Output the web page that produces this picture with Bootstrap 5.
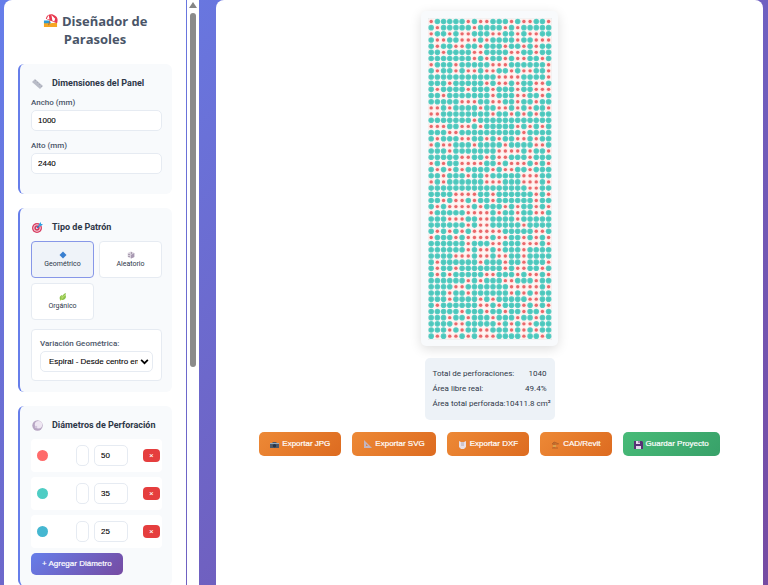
<!DOCTYPE html>
<html lang="es">
<head>
<meta charset="utf-8">
<meta name="viewport" content="width=device-width, initial-scale=1">
<title>Diseñador de Parasoles</title>
<link rel="stylesheet" href="https://cdn.jsdelivr.net/npm/bootstrap@5.3.0/dist/css/bootstrap.min.css">
<style>
body{font-family:Roboto,"Noto Sans",sans-serif;font-size:8px;line-height:12px;color:#2d3748;background:linear-gradient(135deg,#667eea,#764ba2);height:100vh;overflow:hidden}
.shell{height:100vh;padding:0 5px 0 4px;gap:17px}
.side{width:195px;gap:1px}
.side-body{border-radius:8px 0 0 0;padding:12px 14px 0;overflow:hidden;background:#fff}
.app-title{font-family:"Open Sans","Noto Sans",sans-serif;font-size:13px;line-height:18px;font-weight:700;color:#4a5568;padding:0 20px;margin:0 0 16px}
.app-title svg{width:15px;height:15px;margin-right:1px;vertical-align:-2px}
.block{background:#f8fafc;border-left:2px solid #667eea;border-radius:6px;padding:12px 10px 11px 11px;margin-bottom:14px}
.block-title{font-size:9px;line-height:14px;font-weight:700;margin:0 0 7px;white-space:nowrap}
.block-title svg{width:11px;height:11px;margin:0 9px 0 1px;flex:none}
.field{margin-bottom:9px}
.field label,.variation label{display:block;font-size:8px;line-height:12px;font-weight:500;color:#4a5568;margin-bottom:1px}
.form-control,.form-select{font:8px/14px "Liberation Sans",Arial,sans-serif;color:#000;border:1px solid #e6ebf2;border-radius:5px;padding:2px 6px;height:21px;min-height:0;-webkit-text-stroke:.1px #000}
.patterns{display:grid;grid-template-columns:1fr 1fr;gap:5px}
.pattern{height:37px;border:1px solid #e6ebf2;border-radius:4px;background:#fff;font-size:7px;line-height:9px;color:#2d3748;padding:0}
.pattern svg{width:8px;height:8px;display:block;margin:0 auto 1px}
.pattern.active{background:#eff3f9;border-color:#8797e8}
.variation{background:#fff;border:1px solid #e6ebf2;border-radius:4px;padding:8px 8px;margin-top:9px}
.form-select{padding:2px 14px 2px 8px;background-size:9px;background-position:right 3px center;background-image:url("data:image/svg+xml,%3Csvg xmlns='http://www.w3.org/2000/svg' viewBox='0 0 16 16'%3E%3Cpath fill='none' stroke='black' stroke-width='3' d='M2 5l6 6 6-6'/%3E%3C/svg%3E");text-overflow:clip}
.diam{background:#fff;border-radius:4px;height:33px;padding:0 2px 0 6px;margin-bottom:5px}
.swatch{width:11px;height:11px;border-radius:50%}
.diam .tiny{width:13px;padding:2px;margin-left:28px;margin-right:5px}
.diam .num{width:34px}
.del{width:17px;height:13px;border:0;border-radius:4px;background:#e53e3e;color:#fff;font-size:8px;line-height:12px;padding:0;margin-left:auto}
.act{border:0;border-radius:5px;color:#fff;font:8px/14px "Liberation Sans",Arial,sans-serif;-webkit-text-stroke:.2px #fff;white-space:nowrap}
.act svg{width:9px;height:9px;margin-right:3px}
.add{background:linear-gradient(135deg,#667eea,#764ba2);padding:4px 11px}
.orange{background:linear-gradient(135deg,#ed8936,#dd6b20);padding:5px 11px}
.green{background:linear-gradient(135deg,#48bb78,#38a169);padding:5px 11px}
.scroller{width:12px;background:#fff;padding:2px 3px 0}
.scroller svg{width:8px;height:6px;margin-left:-1px;display:block}
.thumb{height:354px;margin-top:5px;border-radius:4px;background:#8b8b8b}
.stage{background:#fff;border-radius:8px 8px 0 0;padding-top:11px}
.sheet{background:#f8fafc;border-radius:5px;padding:7px 6px 6px 7px;box-shadow:0 3px 12px #0002}
.sheet svg{display:block;width:124px;height:322px}
.stats{background:#edf2f7;border-radius:5px;width:130px;margin-top:12px;padding:8px;height:62px}
.stats div{height:15px;line-height:15px;white-space:nowrap}
.exports{gap:11px;margin-top:12px}
</style>
<script src="https://cdn.jsdelivr.net/npm/bootstrap@5.3.0/dist/js/bootstrap.bundle.min.js"></script>
</head>
<body>
<div class="shell d-flex">
 <aside class="side d-flex flex-shrink-0">
  <div class="side-body flex-grow-1">
   <h1 class="app-title text-center"><svg viewBox="0 0 16 16"><path fill="#f6a623" d="M1 10l7 1 7-1v5H1z"/><path fill="#2b9bd6" d="M1 8h5l3 3H1z"/><path stroke="#9b6a4a" d="M8 6l-2 7"/><path fill="#e8394f" d="M3 6C4 1 10 0 13 3c3 2 3 5 2 8z"/><path fill="#fff" d="M6 2l1 5-3-1zM9 2l1 6 2 1 1-3z"/></svg> Diseñador de Parasoles</h1>
   <section class="block">
    <h2 class="block-title d-flex align-items-center"><svg viewBox="0 0 11 11"><path fill="#b9bcc7" d="M3 1l8 7-3 3-8-7z"/><path stroke="#9298a6" stroke-width=".5" d="M4 2L3 3m3 1L5 5m3 1L7 7m3 1L9 9"/></svg>Dimensiones del Panel</h2>
    <div class="field"><label for="w">Ancho (mm)</label><input id="w" class="form-control" value="1000"></div>
    <div class="field"><label for="h">Alto (mm)</label><input id="h" class="form-control" value="2440"></div>
   </section>
   <section class="block">
    <h2 class="block-title d-flex align-items-center"><svg viewBox="0 0 11 11"><circle cx="5" cy="6" r="5" fill="#d83c61"/><circle cx="5" cy="6" r="3.3" fill="none" stroke="#f5d9df"/><circle cx="5" cy="6" r="1" fill="#fff"/><path stroke="#3478bd" stroke-width="1.4" d="M5 6l4-4"/><path fill="#30a2e2" d="M7 2l2-2v2h2L9 4H7z"/></svg>Tipo de Patrón</h2>
    <div class="patterns">
     <button class="pattern active"><svg viewBox="0 0 8 8"><path fill="#397fd0" d="M4 .5L7.5 4 4 7.5.5 4z"/></svg>Geométrico</button>
     <button class="pattern"><svg viewBox="0 0 8 8"><path fill="#d8d0dc" d="M4 .5l3.3 1.6v3.8L4 7.5.7 5.9V2.1z"/><path fill="#a899b2" d="M4 4l3.3-1.9v3.8L4 7.5z"/><path stroke="#67566f" stroke-width=".8" stroke-dasharray="1 1" d="M2 3v3M4 2h2"/></svg>Aleatorio</button>
     <button class="pattern"><svg viewBox="0 0 8 8"><path fill="#8bc34a" d="M1 7C0 4 1 3 3 2l1 1c0-2 1-2 3-3-1 2 0 3 0 4-1 3-3 3-5 3z"/><path stroke="#d7e983" stroke-width=".7" d="M1 8l5-6M3 5V3"/></svg>Orgánico</button>
    </div>
    <div class="variation"><label for="v">Variación Geométrica:</label><select id="v" class="form-select"><option>Espiral - Desde centro en espiral</option></select></div>
   </section>
   <section class="block">
    <h2 class="block-title d-flex align-items-center"><svg viewBox="0 0 11 11"><circle cx="5.5" cy="5.5" r="5.2" fill="#b7a5c3"/><circle cx="6.5" cy="4.8" r="3.7" fill="#eee6f2"/><circle cx="4" cy="7" r="1.3" fill="#d3c5dc"/></svg>Diámetros de Perforación</h2>
    <div class="diam d-flex align-items-center"><span class="swatch" style="background:#ff6b6b"></span><input class="form-control tiny" aria-label="Nombre 1"><input class="form-control num" aria-label="Diámetro 1" value="50"><button class="del" aria-label="Eliminar 1">×</button></div>
    <div class="diam d-flex align-items-center"><span class="swatch" style="background:#4ecdc4"></span><input class="form-control tiny" aria-label="Nombre 2"><input class="form-control num" aria-label="Diámetro 2" value="35"><button class="del" aria-label="Eliminar 2">×</button></div>
    <div class="diam d-flex align-items-center"><span class="swatch" style="background:#45b7d1"></span><input class="form-control tiny" aria-label="Nombre 3"><input class="form-control num" aria-label="Diámetro 3" value="25"><button class="del" aria-label="Eliminar 3">×</button></div>
    <button class="act add">+ Agregar Diámetro</button>
   </section>
  </div>
  <div class="scroller"><svg viewBox="0 0 8 6"><path fill="#858585" d="M4 0l4 6H0z"/></svg><div class="thumb"></div></div>
 </aside>
 <main class="stage flex-grow-1 d-flex flex-column align-items-center">
  <div class="sheet"><svg id="panel" viewBox="0 0 124 322" role="img" aria-label="Panel perforado"></svg></div>
  <div class="stats">
   <div class="d-flex justify-content-between"><span>Total de perforaciones:</span><span>1040</span></div>
   <div class="d-flex justify-content-between"><span>Área libre real:</span><span>49.4%</span></div>
   <div class="d-flex justify-content-between"><span>Área total perforada:</span><span>10411.8 cm²</span></div>
  </div>
  <div class="exports d-flex">
   <button class="act orange d-flex align-items-center"><svg viewBox="0 0 9 9"><path fill="#4f5865" d="M0 3h2l1-1h3l1 1h2v5H0z"/><path fill="#92aabd" d="M0 3h9v1H0z"/><circle cx="4.5" cy="5.7" r="1.7" fill="#263548"/></svg>Exportar JPG</button>
   <button class="act orange d-flex align-items-center"><svg viewBox="0 0 9 9"><path fill="#c4b5bd" fill-rule="evenodd" d="M1 0l8 8H1zM3 4v2h2z"/></svg>Exportar SVG</button>
   <button class="act orange d-flex align-items-center"><svg viewBox="0 0 9 9"><path fill="#e8dfe5" d="M1 1l2 1h3l2-1v6L6 9H3L1 7z"/><path stroke="#a59aa8" stroke-width=".8" d="M3 3h3M3 5h3"/></svg>Exportar DXF</button>
   <button class="act orange d-flex align-items-center"><svg viewBox="0 0 9 9"><path fill="none" stroke="#b4632b" d="M1 8h6M3 8V2l5 2M1 4h6M3 2L1 4"/><path fill="#d9a04c" d="M2 5h3v2H2z"/></svg>CAD/Revit</button>
   <button class="act green d-flex align-items-center"><svg viewBox="0 0 9 9"><path fill="#583275" d="M0 1h8l1 1v7H0z"/><path fill="#e7d9ed" d="M2 1h4v3H2zM2 6h5v3H2z"/><path fill="#583275" d="M4.5 1h1v2h-1z"/></svg>Guardar Proyecto</button>
  </div>
 </main>
</div>
<script>
// Columns of the small perforations in each row; the others are large.
const small=`0 6 8 9 13 15 16 19|1 7 12 14|0 3 5 6 10 11 14 16 17|1 2 5 6 7 9 14 17 18 19|1 4 5 8 12 15 17|2 7 8 13 14 17|7 9 12 14 15 18|0 4 10 11 12 19|1 4 6 7 9 10 13 15 16 19|11 12 13 14 19|3 9 11 12 14 17 18|1 6 10 14 17 18 19|2 10 14 15 18|5 6 7 10 11 14 17|0 1 3 8 11 12 14 16 19|0 1 10 13 15 17|7|0 1 2 5 6 8 14 16 18|3 4 15|1 5 6 9 11 14 15 17|0 2 3 7 12 17 18|3 11 12 13 14 16 19|5 6 9 11 12 16|0 2 5 6 7 8 11 13 14 15 17 19|1 3 5 10 12 13 16|2 6 9 15 16 17|0 2 9 10 11 15 16 17 19|16 17|4 5 6 7 10 17 19|2 4 5 7 10 17|1 3 4 5 6 8 12 14 17 19|0 6 7 8 9 11 14 17 18|3 4 5 8 9 14|6 8 9 15|1 3 5 7 8 9 10 11 17 18|0 4 6 7 8 9 11 12 15 17 19|6 10 11 15 16 17 19|6 8 9 11 15|4 5 6 8 9 11 12 15|1 8 12 15 19|1 4 12 14 15 18|1 3 9 10 14 16 17 19|6 8 12 13 17|4 5 13 14 15 16 17 19|3 6 13 15 17|3 8 10 16 17|1 8 9 11 15 17 19|5 9 12 15 18|3 6 10 14 17|4 5 11 13 15 16|3 5 8 9 13 15 17|1 3 4 6 8 9 10 15 18`.split('|').map(r=>r.split(' ').map(Number));
let dots='<path fill="#fdf8f7" stroke="#d9e2e6" stroke-width=".6" d="M0 0h124v322H0z"/>';
small.forEach((r,j)=>{for(let i=0;i<20;i++){const s=r.includes(i),at=`cx="${3.2+i*6.18}" cy="${3.5+j*6.17}"`;dots+=s?`<circle ${at} r="2.8" fill="#ffe9e6"/><circle ${at} r="1.7" fill="#e9686b"/>`:`<circle ${at} r="2.8" fill="#58cdc3"/><circle ${at} r="1.7" fill="#4cc6bb"/>`}});
document.getElementById('panel').innerHTML=dots;
</script>
</body>
</html>
